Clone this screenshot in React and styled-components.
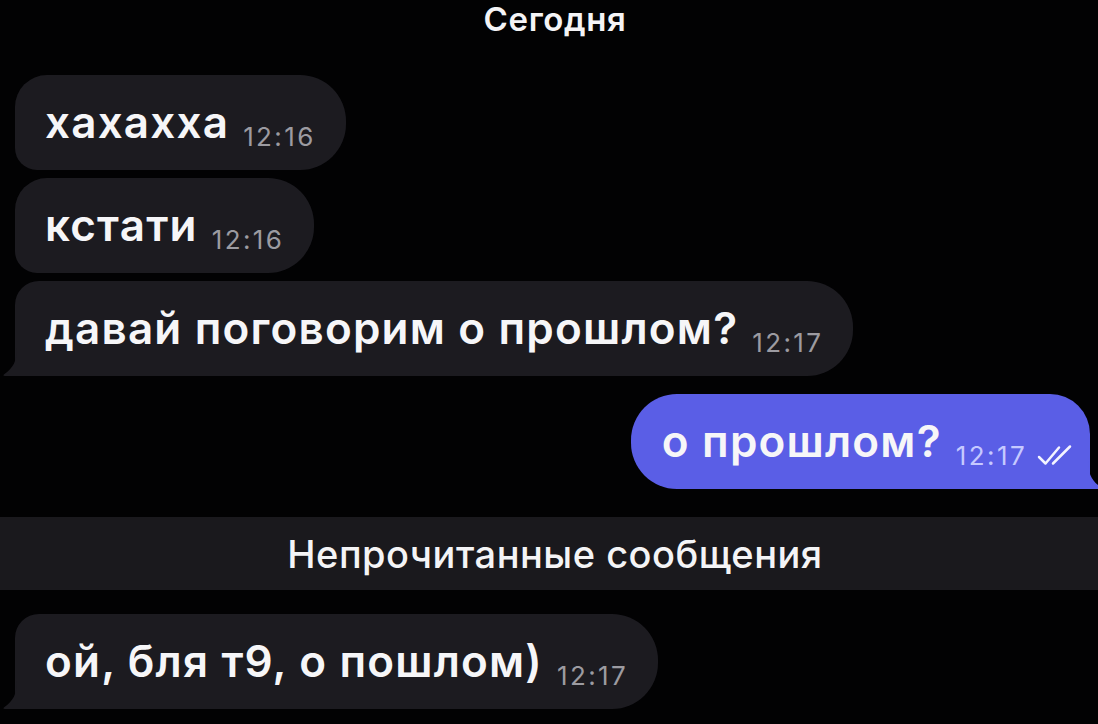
import styled, {createGlobalStyle} from 'styled-components';

const GlobalStyle = createGlobalStyle`
  html, body {
    margin: 0;
    padding: 0;
    background: #000;
  }
  body {
    font-family: Inter, "Noto Sans", sans-serif;
    color: #f4f4f6;
    overflow: hidden;
  }
`

const Screen = styled.div`
  width: 1098px;
  height: 724px;
  background: #020203;
  display: flex;
  flex-direction: column;
  overflow: hidden;
`

const DateLabel = styled.div`
  height: 38px;
  line-height: 38px;
  padding-left: 12px;
  text-align: center;
  font-size: 33px;
  font-weight: 600;
  letter-spacing: 0.6px;
  color: #f4f4f6;
`

const Group = styled.div`
  display: flex;
  flex-direction: column;
  align-items: ${p => p.$out ? 'flex-end' : 'flex-start'};
  gap: 8px;
  margin-top: ${p => p.$top}px;
  padding: ${p => p.$out ? '0 8px 0 0' : '0 0 0 15px'};
`

const Bubble = styled.div`
  position: relative;
  display: flex;
  align-items: flex-end;
  height: 95px;
  box-sizing: border-box;
  padding: ${p => p.$out ? '22px 15px 18px 31px' : '22px 30px 18px 30px'};
  background: ${p => p.$out ? '#5a5ee6' : '#1c1b20'};
  border-radius: ${p => p.$out
    ? '46px 40px 4px 46px'
    : p.$tail ? '24px 46px 46px 4px' : '32px 46px 46px 22px'};
`

const Text = styled.span`
  font-size: 44px;
  line-height: 50px;
  font-weight: 600;
  letter-spacing: 1.2px;
  padding-bottom: 5px;
  white-space: nowrap;
  color: #f6f6f8;
`

const Meta = styled.span`
  display: flex;
  align-items: center;
  gap: 10px;
  margin-left: 14px;
  font-size: 26px;
  line-height: 30px;
  font-weight: 400;
  letter-spacing: 2.4px;
  color: ${p => p.$out ? '#c6c9ff' : '#9c9ba1'};
  white-space: nowrap;
`

const TailSvg = styled.svg`
  position: absolute;
  bottom: 0;
  ${p => p.$out ? 'right: -12px; transform: scaleX(-1);' : 'left: -12px;'}
  width: 24px;
  height: 28px;
`

const Banner = styled.div`
  margin-top: 28px;
  height: 73px;
  background: #1a191d;
  display: flex;
  align-items: center;
  justify-content: center;
  padding-left: 12px;
  font-size: 38px;
  font-weight: 500;
  letter-spacing: 0.5px;
  color: #f4f4f6;
`

const Tail = ({out, color}) => (
  <TailSvg $out={out} viewBox="0 0 24 28">
    <path d="M14 0 L24 0 L24 28 L2 28 C0 28 0 27 1.5 26 C10 20 14 13 14 0 Z" fill={color} />
  </TailSvg>
)

const Checks = () => (
  <svg width="38" height="24" viewBox="0 0 38 24" fill="none">
    <path d="M2 13 L8.5 19.5 L22 3.5" stroke="#f4f4ff" strokeWidth="2.5" strokeLinecap="round" strokeLinejoin="round" />
    <path d="M16 19.5 L33 2.5" stroke="#f4f4ff" strokeWidth="2.5" strokeLinecap="round" />
  </svg>
)

const Message = ({text, time, out, tail}) => {
  const color = out ? '#5a5ee6' : '#1c1b20';
  return (
    <Bubble $out={out} $tail={tail}>
      <Text>{text}</Text>
      <Meta $out={out}>
        {time}
        {out && <Checks />}
      </Meta>
      {tail && <Tail out={out} color={color} />}
    </Bubble>
  )
}

export default function App() {
  return (
    <Screen>
      <GlobalStyle />
      <DateLabel>Сегодня</DateLabel>
      <Group $top={37}>
        <Message text="хахахха" time="12:16" />
        <Message text="кстати" time="12:16" />
        <Message text="давай поговорим о прошлом?" time="12:17" tail />
      </Group>
      <Group $out $top={18}>
        <Message text="о прошлом?" time="12:17" out tail />
      </Group>
      <Banner>Непрочитанные сообщения</Banner>
      <Group $top={24}>
        <Message text="ой, бля т9, о пошлом)" time="12:17" tail />
      </Group>
    </Screen>
  )
}
